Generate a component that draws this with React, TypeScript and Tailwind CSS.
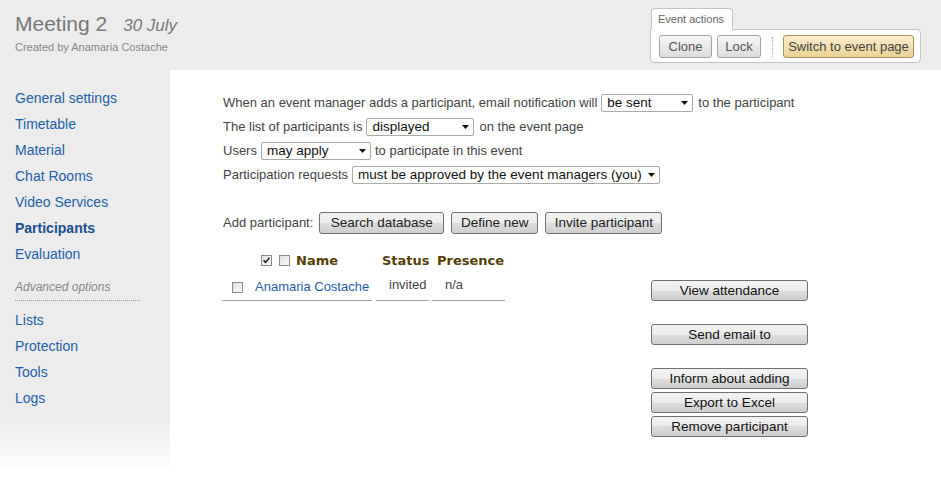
import React from 'react';

const font = { fontFamily: '"Liberation Sans", Arial, sans-serif' };

const navTop = ['General settings', 'Timetable', 'Material', 'Chat Rooms', 'Video Services', 'Participants', 'Evaluation'];
const navBottom = ['Lists', 'Protection', 'Tools', 'Logs'];

function Select({ value, width }: { value: string; width: string }) {
    return (
        <div className={`mx-[4px] flex h-[18px] items-center justify-between rounded-[2px] border border-[#aaaaaa] bg-white pl-[5px] pr-[4px] text-[13.5px] text-[#111] ${width}`}>
            <span className="leading-none">{value}</span>
            <svg width="7" height="4" viewBox="0 0 7 4">
                <path d="M0 0h7L3.5 4z" fill="#111" />
            </svg>
        </div>
    );
}

function Checkbox({ checked = false }: { checked?: boolean }) {
    return (
        <svg width="11" height="11" viewBox="0 0 11 11" className="shrink-0">
            <defs>
                <linearGradient id={checked ? 'cbg1' : 'cbg0'} x1="0" y1="0" x2="1" y2="1">
                    <stop offset="0" stopColor="#dcdcdc" />
                    <stop offset="1" stopColor="#ffffff" />
                </linearGradient>
            </defs>
            <rect x="0.5" y="0.5" width="10" height="10" fill={`url(#${checked ? 'cbg1' : 'cbg0'})`} stroke="#8a8a8a" />
            {checked && <path d="M2.5 5.2l2 2.2 4-4.6" fill="none" stroke="#222" strokeWidth="1.6" />}
        </svg>
    );
}

function GrayButton({ label, className = '' }: { label: string; className?: string }) {
    return (
        <button className={`flex items-center justify-center rounded-[3px] border border-[#707070] bg-[linear-gradient(#f3f3f3,#ebebeb_50%,#dddddd_50%,#cfcfcf)] leading-none text-[#111] ${className}`}>
            {label}
        </button>
    );
}

export default function App() {
    return (
        <div className="h-[493px] w-[941px] overflow-hidden bg-white text-[13px]" style={font}>
            {/* Header */}
            <div className="flex h-[70px] justify-between bg-[#ececec]">
                <div className="pl-[15px] pt-[12px]">
                    <div className="flex items-baseline leading-[24px] text-[#777]">
                        <span className="text-[21px]">Meeting 2</span>
                        <span className="ml-[16px] text-[17px] italic">30 July</span>
                    </div>
                    <div className="mt-[2px] text-[11px] leading-[14px] text-[#888]">Created by Anamaria Costache</div>
                </div>

                {/* Event actions */}
                <div className="pr-[20px] pt-[8px]">
                    <div className="relative z-10 ml-[1px] h-[22px] w-[82px] rounded-t-[4px] border border-b-0 border-[#c4c4c4] bg-white px-[6px] text-[11px] leading-[20px] text-[#666]">
                        Event actions
                    </div>
                    <div className="-mt-px flex h-[34px] w-[271px] items-center rounded-[4px] rounded-tl-none border border-[#c4c4c4] bg-white pl-[8px] pt-px">
                        <button className="flex h-[23px] w-[53px] items-center justify-center rounded-[3px] border border-[#a3a3a3] bg-[linear-gradient(#f7f7f7,#dcdcdc)] text-[13px] text-[#555]">
                            Clone
                        </button>
                        <button className="ml-[5px] flex h-[23px] w-[44px] items-center justify-center rounded-[3px] border border-[#a3a3a3] bg-[linear-gradient(#f7f7f7,#dcdcdc)] text-[13px] text-[#555]">
                            Lock
                        </button>
                        <div className="ml-[11px] h-[20px] border-l border-dotted border-[#aaaaaa]" />
                        <button className="ml-[10px] flex h-[23px] w-[131px] items-center justify-center rounded-[3px] border border-[#a8925e] bg-[linear-gradient(#fbefcd,#ebd193)] text-[13px] text-[#444]">
                            Switch to event page
                        </button>
                    </div>
                </div>
            </div>

            <div className="flex h-[423px]">
                {/* Sidebar */}
                <div className="w-[170px] shrink-0 bg-[linear-gradient(to_bottom,#ececec_0,#ececec_353px,#ffffff_403px)] pl-[15px] pt-[15px] text-[14px]">
                    {navTop.map((item) => (
                        <div
                            key={item}
                            className={`h-[26px] leading-[26px] ${item === 'Participants' ? 'font-bold text-[#1b4f8e]' : 'text-[#1f5fa9]'}`}
                        >
                            {item}
                        </div>
                    ))}
                    <div className="mt-[6px] h-[28px] w-[125px] border-b border-dotted border-[#999] text-[12px] italic leading-[28px] text-[#888]">
                        Advanced options
                    </div>
                    <div className="mt-[6px]">
                        {navBottom.map((item) => (
                            <div key={item} className="h-[26px] leading-[26px] text-[#1f5fa9]">
                                {item}
                            </div>
                        ))}
                    </div>
                </div>

                {/* Main panel */}
                <div className="flex-1 rounded-tl-[20px] bg-white pl-[53px] pt-[21px] text-[#444]">
                    <div className="flex h-[24px] items-center">
                        <span>When an event manager adds a participant, email notification will</span>
                        <Select value="be sent" width="w-[92px]" />
                        <span className="ml-px">to the participant</span>
                    </div>
                    <div className="flex h-[24px] items-center">
                        <span>The list of participants is</span>
                        <Select value="displayed" width="w-[108px]" />
                        <span className="ml-px">on the event page</span>
                    </div>
                    <div className="flex h-[24px] items-center">
                        <span>Users</span>
                        <Select value="may apply" width="w-[110px]" />
                        <span>to participate in this event</span>
                    </div>
                    <div className="flex h-[24px] items-center">
                        <span>Participation requests</span>
                        <Select value="must be approved by the event managers (you)" width="w-[308px]" />
                    </div>

                    {/* Add participant */}
                    <div className="mt-[25px] flex h-[22px] items-center">
                        <span className="mr-[6px]">Add participant:</span>
                        <div className="flex gap-[7px]">
                            <GrayButton label="Search database" className="h-[22px] w-[125px] text-[13.5px] text-[#222]" />
                            <GrayButton label="Define new" className="h-[22px] w-[87px] text-[13.5px] text-[#222]" />
                            <GrayButton label="Invite participant" className="h-[22px] w-[117px] text-[13.5px] text-[#222]" />
                        </div>
                    </div>

                    {/* Participants table + actions */}
                    <div className="mt-[13px] flex">
                        <div className="-ml-px w-[429px] shrink-0">
                            <div className="flex h-[27px] items-center text-[#553f05]" style={{ fontFamily: '"DejaVu Sans", Verdana, sans-serif' }}>
                                <div className="flex w-[150px] items-center pl-[39px]">
                                    <Checkbox checked />
                                    <span className="ml-[7px]"><Checkbox /></span>
                                    <span className="ml-[6px] text-[13px] font-bold">Name</span>
                                </div>
                                <div className="ml-[4px] w-[53px] pl-[6px] text-[13px] font-bold">Status</div>
                                <div className="ml-[3px] w-[73px] pl-[5px] text-[13px] font-bold">Presence</div>
                            </div>
                            <div className="flex h-[27px]">
                                <div className="flex w-[150px] items-center border-b border-[#a0a0a0] pl-[10px]">
                                    <Checkbox />
                                    <span className="ml-[12px] text-[#1f5fa9]">Anamaria Costache</span>
                                </div>
                                <div className="ml-[4px] flex w-[53px] items-center border-b border-[#a0a0a0] pb-[5px] pl-[13px]">
                                    invited
                                </div>
                                <div className="ml-[3px] flex w-[73px] items-center border-b border-[#a0a0a0] pb-[5px] pl-[13px]">
                                    n/a
                                </div>
                            </div>
                        </div>

                        <div className="mt-[33px] flex w-[157px] flex-col">
                            <GrayButton label="View attendance" className="h-[21px] w-full text-[13.5px]" />
                            <GrayButton label="Send email to" className="mt-[23px] h-[21px] w-full text-[13.5px]" />
                            <GrayButton label="Inform about adding" className="mt-[23px] h-[21px] w-full text-[13.5px]" />
                            <GrayButton label="Export to Excel" className="mt-[3px] h-[21px] w-full text-[13.5px]" />
                            <GrayButton label="Remove participant" className="mt-[3px] h-[21px] w-full text-[13.5px]" />
                        </div>
                    </div>
                </div>
            </div>
        </div>
    );
}
